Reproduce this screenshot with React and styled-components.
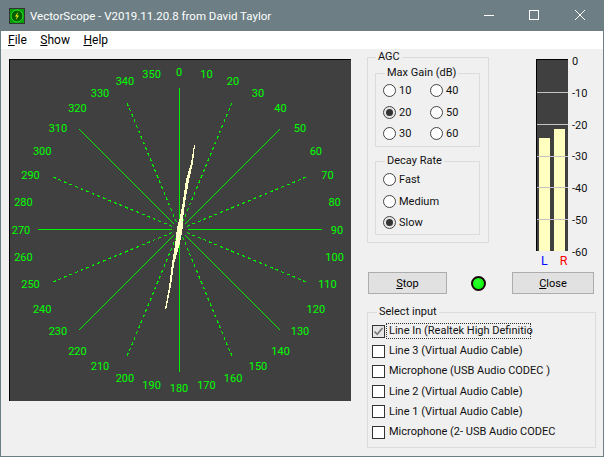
import styled, { createGlobalStyle } from "styled-components";

const GlobalStyle = createGlobalStyle`
  html, body {
    margin: 0;
    padding: 0;
    background: #f0f0f0;
  }
  * {
    box-sizing: border-box;
  }
`;

const UI_FONT = `Roboto, "Liberation Sans", Arial, sans-serif`;

const Window = styled.div`
  width: 604px;
  height: 457px;
  border: solid #6d7f85;
  border-width: 0 1px 1px 1px;
  background: #f0f0f0;
  font-family: ${UI_FONT};
  font-size: 11px;
  color: #111;
  overflow: hidden;
`;

const TitleBar = styled.div`
  height: 31px;
  margin: 0 -1px;
  padding: 0 1px 0 9px;
  background: #6d7f85;
  display: flex;
  align-items: center;
  color: #fff;
  font-size: 11.5px;
`;

const TitleText = styled.span`
  margin-left: 5px;
  flex: 1;
`;

const WinButton = styled.div`
  width: 46px;
  height: 30px;
  align-self: flex-start;
  display: flex;
  align-items: center;
  justify-content: center;
`;

const MenuBar = styled.div`
  height: 18px;
  background: #fff;
  display: flex;
  align-items: center;
  padding-left: 7px;
  gap: 13.5px;
  font-size: 12px;
  color: #000;
`;

const Key = styled.span`
  text-decoration: underline;
`;

const Content = styled.div`
  display: flex;
  padding: 8px 0 0 8px;
`;

const ScopeBox = styled.div`
  width: 342px;
  height: 342px;
  margin-top: 2px;
  background: #404040;
  border-left: 1px solid #000;
  border-top: 1px solid #000;

  svg {
    display: block;
  }
`;

const Side = styled.div`
  width: 229px;
  margin-left: 16px;
`;

const TopRow = styled.div`
  display: flex;
  align-items: flex-start;
  height: 215px;
`;

const Group = styled.div`
  position: relative;
  border: 1px solid #dcdcdc;
  width: ${({ $width }) => $width}px;
  height: ${({ $height }) => $height}px;
  padding: ${({ $padding }) => $padding};
`;

const Legend = styled.span`
  position: absolute;
  top: -8px;
  left: ${({ $left }) => $left}px;
  padding: 0 2px;
  line-height: 14px;
  background: #f0f0f0;
  white-space: nowrap;
`;

const Stack = styled.div`
  display: flex;
  flex-direction: column;
  gap: 14px;
`;

const RadioGrid = styled.div`
  display: grid;
  grid-template-columns: ${({ $cols }) => `repeat(${$cols}, 47px)`};
  grid-auto-rows: 21.5px;
`;

const RadioItem = styled.div`
  display: flex;
  align-items: center;
  gap: 3px;
`;

const RadioDot = styled.span`
  width: 13px;
  height: 13px;
  flex: none;
  border-radius: 50%;
  border: 1px solid #444;
  background: ${({ $on }) => ($on ? "#e6e6e6" : "#fff")};
  display: flex;
  align-items: center;
  justify-content: center;

  &::after {
    content: "";
    display: ${({ $on }) => ($on ? "block" : "none")};
    width: 7px;
    height: 7px;
    border-radius: 50%;
    background: #333;
  }
`;

const MeterColumn = styled.div`
  margin: 2px 0 0 47px;
`;

const Meter = styled.div`
  position: relative;
  width: 32px;
  height: 192px;
  background: #404040;
  border-left: 1px solid #000;
  border-top: 1px solid #000;
  display: flex;
  align-items: flex-end;
  gap: 4px;
  padding-left: 2px;
`;

const Bar = styled.div`
  width: 11px;
  height: ${({ $h }) => $h}px;
  background: #ffffc0;
`;

const Tick = styled.div`
  position: absolute;
  left: 0;
  right: 0;
  top: ${({ $top }) => $top}px;
  height: 1px;
  background: #c4c4c4;
`;

const Channels = styled.div`
  display: flex;
  gap: 12px;
  width: 32px;
  padding-left: 5px;
  font-size: 12.5px;
  line-height: 20px;
`;

const Channel = styled.span`
  color: ${({ $color }) => $color};
`;

const Scale = styled.div`
  height: 205px;
  margin: -2px 0 0 4px;
  display: flex;
  flex-direction: column;
  justify-content: space-between;
  line-height: 14px;
`;

const ControlRow = styled.div`
  display: flex;
  align-items: center;
  justify-content: space-between;
  width: 226px;
  margin: 0 0 18px 1px;
`;

const Button = styled.div`
  width: ${({ $width }) => $width}px;
  height: 22px;
  background: #e1e1e1;
  border: 1px solid #adadad;
  display: flex;
  align-items: center;
  justify-content: center;
  color: #000;
`;

const Led = styled.div`
  width: 15px;
  height: 15px;
  margin: 0 1px 0 -1px;
  border-radius: 50%;
  border: 2px solid #1a0606;
  background: radial-gradient(circle at 40% 35%, #30ff30, #00f000);
`;

const InputList = styled.div`
  display: grid;
  grid-auto-rows: 20.2px;
`;

const InputRow = styled.div`
  display: flex;
  align-items: center;
  gap: 2px;
`;

const CheckBox = styled.span`
  width: 13px;
  height: 13px;
  flex: none;
  border: 1px solid #333;
  background: ${({ $on }) => ($on ? "#e6e6e6" : "#fff")};
  display: flex;
  align-items: center;
  justify-content: center;
`;

const InputName = styled.span`
  width: ${({ $focus }) => ($focus ? "143px" : "auto")};
  white-space: nowrap;
  line-height: 14px;
  outline: ${({ $focus }) => ($focus ? "1px dotted #333" : "none")};
  padding-left: 2px;
`;

const CENTER = 169.5;
const labels = Array.from({ length: 36 }, (_, i) => i * 10);
const solidAngles = [0, 45, 90, 135, 180, 225, 270, 315];
const dashedAngles = [22.5, 67.5, 112.5, 157.5, 202.5, 247.5, 292.5, 337.5];

const polar = (deg, r, cx = CENTER, cy = CENTER) => {
  const a = (deg * Math.PI) / 180;
  return [cx + r * Math.sin(a), cy - r * Math.cos(a)];
};

// left edge going down, then right edge going up
const traceRaw = [
  [194, 145], [191, 163], [186, 180], [182.7, 203], [180, 217], [177, 228],
  [175.3, 243], [172, 263], [169, 287], [165, 309],
  [166.3, 309], [170.7, 287], [174.3, 263], [180, 243], [182.7, 228],
  [183.3, 217], [185, 203], [189, 180], [193, 163], [195, 145],
];
const trace = traceRaw.map(([x, y]) => `${x - 10},${y - 60}`).join(" ");

function Scope() {
  return (
    <ScopeBox>
      <svg width="341" height="341" viewBox="0 0 341 341">
        {solidAngles.map((deg) => {
          const [x1, y1] = polar(deg, 8);
          const [x2, y2] = polar(deg, 142);
          return (
            <line key={deg} x1={x1} y1={y1} x2={x2} y2={y2} stroke="#00f000" strokeWidth="1" shapeRendering="crispEdges" />
          );
        })}
        {dashedAngles.map((deg) => {
          const [x1, y1] = polar(deg, 8);
          const [x2, y2] = polar(deg, 140);
          return (
            <line key={deg} x1={x1} y1={y1} x2={x2} y2={y2} stroke="#00f000" strokeWidth="1.2" strokeDasharray="3 3" shapeRendering="crispEdges" />
          );
        })}
        <polygon points={trace} fill="#ffffc8" shapeRendering="crispEdges" />
        {labels.map((deg) => {
          const [x, y] = polar(deg, 158, 169, 170);
          return (
            <text key={deg} x={x} y={y} fill="#00ff00" fontSize="11" textAnchor="middle" dominantBaseline="central">
              {deg}
            </text>
          );
        })}
      </svg>
    </ScopeBox>
  );
}

function AppIcon() {
  return (
    <svg width="16" height="16" viewBox="0 0 16 16">
      <rect x="0.5" y="0.5" width="15" height="15" fill="#00a000" stroke="#333" />
      <circle cx="8" cy="8" r="6" fill="#006000" stroke="#30e030" />
      <path d="M9.5 3.5 L6 8.5 H8 L6.5 12.5 L10 7.5 H8 Z" fill="#ffee00" />
    </svg>
  );
}

function Radio({ label, on }) {
  return (
    <RadioItem>
      <RadioDot $on={on} />
      {label}
    </RadioItem>
  );
}

const inputs = [
  "Line In (Realtek High Definitio",
  "Line 3 (Virtual Audio Cable)",
  "Microphone (USB Audio CODEC )",
  "Line 2 (Virtual Audio Cable)",
  "Line 1 (Virtual Audio Cable)",
  "Microphone (2- USB Audio CODEC",
];

export default function App() {
  return (
    <>
      <GlobalStyle />
      <Window>
        <TitleBar>
          <AppIcon />
          <TitleText>VectorScope - V2019.11.20.8 from David Taylor</TitleText>
          <WinButton>
            <svg width="12" height="12" viewBox="0 0 12 12">
              <path d="M2 6.5H12" stroke="#fff" fill="none" />
            </svg>
          </WinButton>
          <WinButton>
            <svg width="12" height="12" viewBox="0 0 12 12">
              <rect x="1.5" y="1.5" width="9" height="9" stroke="#fff" fill="none" />
            </svg>
          </WinButton>
          <WinButton>
            <svg width="12" height="12" viewBox="0 0 12 12">
              <path d="M1 1L11 11M11 1L1 11" stroke="#fff" fill="none" />
            </svg>
          </WinButton>
        </TitleBar>
        <MenuBar>
          <span><Key>F</Key>ile</span>
          <span><Key>S</Key>how</span>
          <span><Key>H</Key>elp</span>
        </MenuBar>
        <Content>
          <Scope />
          <Side>
            <TopRow>
              <Group $width={122} $height={186} $padding="15px 7px 0">
                <Legend $left={8}>AGC</Legend>
                <Stack>
                  <Group $width={105} $height={74} $padding="6px 0 0 7px">
                    <Legend $left={9}>Max Gain (dB)</Legend>
                    <RadioGrid $cols={2}>
                      <Radio label="10" />
                      <Radio label="40" />
                      <Radio label="20" on />
                      <Radio label="50" />
                      <Radio label="30" />
                      <Radio label="60" />
                    </RadioGrid>
                  </Group>
                  <Group $width={105} $height={74} $padding="7px 0 0 7px">
                    <Legend $left={9}>Decay Rate</Legend>
                    <RadioGrid $cols={1}>
                      <Radio label="Fast" />
                      <Radio label="Medium" />
                      <Radio label="Slow" on />
                    </RadioGrid>
                  </Group>
                </Stack>
              </Group>
              <MeterColumn>
                <Meter>
                  <Bar $h={113} />
                  <Bar $h={122} />
                  {[32, 64, 96, 127, 159].map((top) => (
                    <Tick key={top} $top={top} />
                  ))}
                </Meter>
                <Channels>
                  <Channel $color="#0000ff">L</Channel>
                  <Channel $color="#ff0000">R</Channel>
                </Channels>
              </MeterColumn>
              <Scale>
                {["0", "-10", "-20", "-30", "-40", "-50", "-60"].map((t) => (
                  <span key={t}>{t}</span>
                ))}
              </Scale>
            </TopRow>
            <ControlRow>
              <Button $width={79}><span><Key>S</Key>top</span></Button>
              <Led />
              <Button $width={82}><span><Key>C</Key>lose</span></Button>
            </ControlRow>
            <Group $width={229} $height={136} $padding="8px 0 0 4px">
              <Legend $left={9}>Select input</Legend>
              <InputList>
                {inputs.map((name, i) => (
                  <InputRow key={i}>
                    <CheckBox $on={i === 0}>
                      {i === 0 && (
                        <svg width="11" height="11" viewBox="0 0 11 11">
                          <path d="M1.5 5.5L4.2 8.2L9.5 2" stroke="#777" strokeWidth="1.6" fill="none" />
                        </svg>
                      )}
                    </CheckBox>
                    <InputName $focus={i === 0}>{name}</InputName>
                  </InputRow>
                ))}
              </InputList>
            </Group>
          </Side>
        </Content>
      </Window>
    </>
  );
}
